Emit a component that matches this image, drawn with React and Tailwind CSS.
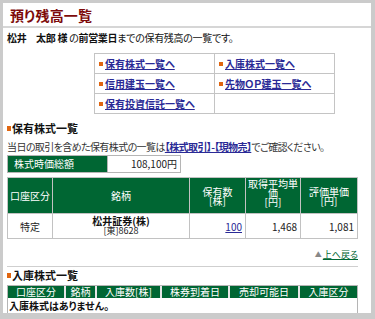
import React from "react";

const F = "font-['Noto_Sans_CJK_JP',sans-serif] [font-feature-settings:'palt']";

function Bullet() {
  return <span className="inline-block w-[4px] h-[4px] bg-[#e0650f] mr-[2px]" />;
}

function LinkCell({ text }) {
  return (
    <td className="border border-[#c4c4c4] h-[20px] p-0 pl-[4px] w-[120px] align-middle">
      {text && (
        <span className="flex items-center">
          <Bullet />
          <a className="text-[#2a2a96] underline font-bold text-[10px] leading-[12px]">{text}</a>
        </span>
      )}
    </td>
  );
}

export default function App() {
  return (
    <div className={`h-[319px] w-[375px] overflow-hidden bg-[#cbcbcb] pl-[3px] pr-[4px] pt-[3px] ${F}`}>
      <div className="bg-white h-[310px] overflow-hidden">
        <div className="h-[25px] pl-[7px] flex items-center border-b-2 border-[#d6d6d6]">
          <h1 className="text-[14px] font-bold text-[#7d0a0a] leading-none tracking-[0.2px]">預り残高一覧</h1>
        </div>
        <div className="pl-[4px] pr-[13px]">
          <p className="mt-[4px] h-[12px] text-[10px] leading-[12px] text-[#111] tracking-[-0.3px]">
            <b>松井　太郎 様</b> の<b>前営業日</b>までの保有残高の一覧です。
          </p>
          <table className="mt-[9px] ml-[87px] border-collapse border border-[#c4c4c4]">
            <tbody>
              <tr>
                <LinkCell text="保有株式一覧へ" />
                <LinkCell text="入庫株式一覧へ" />
              </tr>
              <tr>
                <LinkCell text="信用建玉一覧へ" />
                <LinkCell text="先物ＯＰ建玉一覧へ" />
              </tr>
              <tr>
                <LinkCell text="保有投資信託一覧へ" />
                <LinkCell text="" />
              </tr>
            </tbody>
          </table>
          <div className="mt-[9px] h-[11px] flex items-center">
            <span className="inline-block w-[4px] h-[5px] bg-[#e0650f] mr-[1px]" />
            <span className="text-[11px] font-bold leading-[11px] text-[#111]">保有株式一覧</span>
          </div>
          <p className="mt-[7px] h-[12px] text-[10px] leading-[12px] text-[#333] tracking-[-0.6px]">
            当日の取引を含めた保有株式の一覧は
            <a className="text-[#2a2a96] underline font-bold">【株式取引】-【現物売】</a>
            でご確認ください。
          </p>
          <table className="mt-[2px] border-separate border-spacing-0 border border-[#b5b5b5] text-[10px]">
            <tbody>
              <tr>
                <td className="bg-[#006633] text-white w-[100px] h-[16px] p-0 pl-[6px] leading-none border-r border-[#b5b5b5]">株式時価総額</td>
                <td className="bg-white w-[72px] p-0 text-right pr-[3px] leading-none text-[#222]">108,100円</td>
              </tr>
            </tbody>
          </table>
          <table className="mt-[4px] w-[351px] border-separate border-spacing-[1px] bg-[#c2c2c2] text-[10px] leading-[9px]">
            <thead>
              <tr className="h-[35px] text-white">
                <th className="bg-[#006633] font-normal w-[44px] p-0">口座区分</th>
                <th className="bg-[#006633] font-normal w-[136px] p-0">銘柄</th>
                <th className="bg-[#006633] font-normal w-[55px] p-0">保有数<br />[株]</th>
                <th className="bg-[#006633] font-normal w-[54px] p-0 align-top pt-[1px]">取得平均単<br />価<br />[円]</th>
                <th className="bg-[#006633] font-normal p-0">評価単価<br />[円]</th>
              </tr>
            </thead>
            <tbody>
              <tr className="h-[24px] text-[#222]">
                <td className="bg-white text-center p-0">特定</td>
                <td className="bg-white text-center p-0">
                  <div className="font-bold text-[#111] leading-[10px]">松井証券(株)</div>
                  <div className="text-[9px] leading-[10px]">[東]8628</div>
                </td>
                <td className="bg-white text-right p-0 pr-[3px]"><a className="text-[#2a2a96] underline">100</a></td>
                <td className="bg-white text-right p-0 pr-[3px]">1,468</td>
                <td className="bg-white text-right p-0 pr-[3px]">1,081</td>
              </tr>
            </tbody>
          </table>
          <div className="mt-[11px] h-[9px] flex justify-end items-center text-[9px] leading-[9px]">
            <span className="text-[#888] text-[7px] mr-[1px]">▲</span>
            <a className="text-[#006633] underline">上へ戻る</a>
          </div>
          <div className="mt-[7px] border-t border-[#cfcfcf]" />
          <div className="mt-[3px] h-[11px] flex items-center">
            <span className="inline-block w-[4px] h-[5px] bg-[#e0650f] mr-[1px]" />
            <span className="text-[11px] font-semibold leading-[11px] text-[#111]">入庫株式一覧</span>
          </div>
          <table className="mt-[4px] w-[351px] border-separate border-spacing-0 border border-[#b5b5b5] text-[10px] leading-[12px]">
            <thead>
              <tr className="h-[12px] text-white">
                <th className="bg-[#006633] p-0 font-normal border-r-2 border-[#e6e6e6] w-[58px]">口座区分</th>
                <th className="bg-[#006633] p-0 font-normal border-r-2 border-[#e6e6e6] w-[31px]">銘柄</th>
                <th className="bg-[#006633] p-0 font-normal border-r-2 border-[#e6e6e6] w-[65px]">入庫数[株]</th>
                <th className="bg-[#006633] p-0 font-normal border-r-2 border-[#e6e6e6] w-[68px]">株券到着日</th>
                <th className="bg-[#006633] p-0 font-normal border-r-2 border-[#e6e6e6] w-[70px]">売却可能日</th>
                <th className="bg-[#006633] p-0 font-normal">入庫区分</th>
              </tr>
            </thead>
            <tbody>
              <tr className="h-[15px]">
                <td colSpan={6} className="bg-white p-0 text-left pl-[1px] font-semibold text-[#111]">入庫株式はありません。</td>
              </tr>
            </tbody>
          </table>
        </div>
      </div>
    </div>
  );
}
